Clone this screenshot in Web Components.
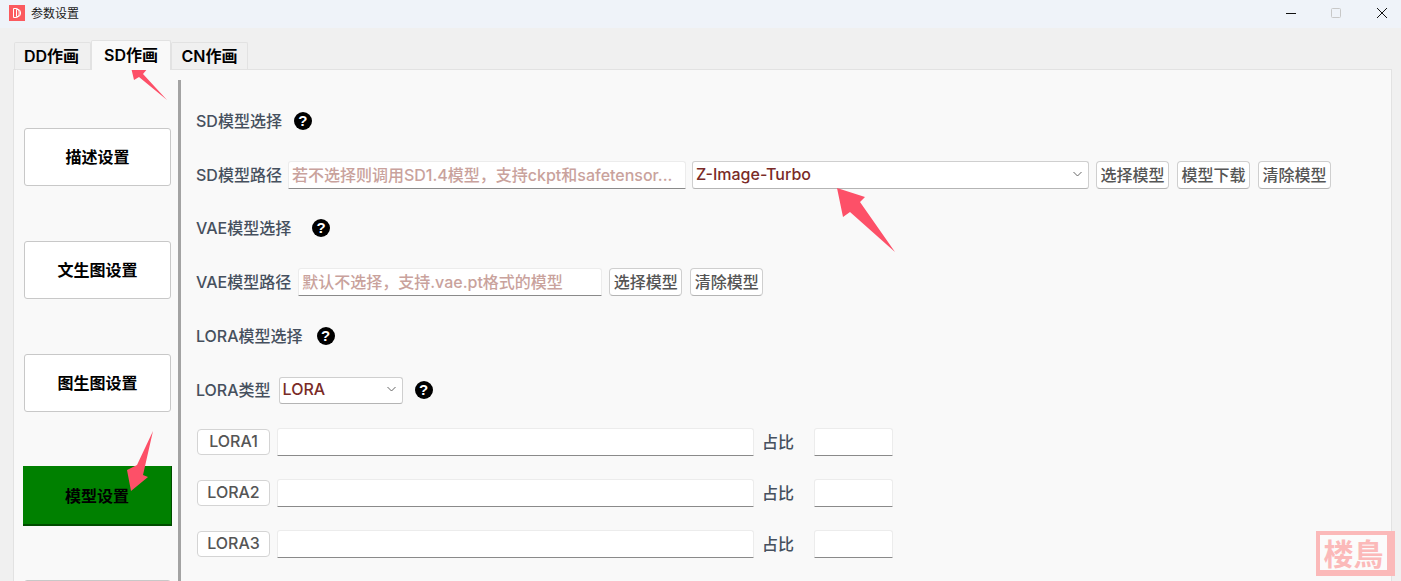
<!DOCTYPE html>
<html lang="zh-CN"><head><meta charset="utf-8"><title>参数设置</title>
<style>
html,body{margin:0;height:581px;overflow:hidden;background:#f0f0f0}
body{font-family:Inter,"Noto Sans CJK SC",sans-serif;font-size:16px;font-weight:500}
</style></head><body>
<app-window>
  <title-bar slot="title">参数设置</title-bar>
  <tab-bar slot="tabs">
    <tab-item style="width:77px;padding-right:2px">DD作画</tab-item>
    <tab-item active style="width:80px">SD作画</tab-item>
    <tab-item style="width:77px">CN作画</tab-item>
  </tab-bar>
  <side-nav slot="nav">
    <side-button>描述设置</side-button>
    <side-button>文生图设置</side-button>
    <side-button>图生图设置</side-button>
    <side-button active>模型设置</side-button>
    <side-button>&nbsp;</side-button>
  </side-nav>
  <form-row top="37"><field-label>SD模型选择</field-label><help-icon style="margin-left:12px"></help-icon></form-row>
  <form-row top="26"><field-label>SD模型路径</field-label>
    <text-input style="width:398px;margin-left:6px" placeholder="若不选择则调用SD1.4模型，支持ckpt和safetensor..."></text-input>
    <combo-box style="width:397px;margin-left:6px">Z-Image-Turbo</combo-box>
    <push-button style="margin-left:7px">选择模型</push-button>
    <push-button style="margin-left:8px">模型下载</push-button>
    <push-button style="margin-left:8px">清除模型</push-button>
  </form-row>
  <form-row top="25"><field-label>VAE模型选择</field-label><help-icon style="margin-left:21px"></help-icon></form-row>
  <form-row top="26"><field-label>VAE模型路径</field-label>
    <text-input style="width:304px;margin-left:7px" placeholder="默认不选择，支持.vae.pt格式的模型"></text-input>
    <push-button style="margin-left:7px">选择模型</push-button>
    <push-button style="margin-left:8px">清除模型</push-button>
  </form-row>
  <form-row top="26"><field-label>LORA模型选择</field-label><help-icon style="margin-left:14px"></help-icon></form-row>
  <form-row top="26"><field-label>LORA类型</field-label>
    <combo-box style="width:124px;margin-left:8px;height:27px">LORA</combo-box>
    <help-icon style="margin-left:12px"></help-icon>
  </form-row>
  <lora-row top="24">LORA1</lora-row>
  <lora-row top="23">LORA2</lora-row>
  <lora-row top="23">LORA3</lora-row>
  <arrow-mark slot="over" points="130,63 148,68 143,74 167,100 139,77 134,80"></arrow-mark>
  <arrow-mark slot="over" points="837,188 865,197 860,202 895,252 850,212 843,217"></arrow-mark>
  <arrow-mark slot="over" points="153,431 143,475 148,477 131,491 127,470 137,465"></arrow-mark>
  <seal-mark slot="over">楼鳥</seal-mark>
</app-window>
<script>
function def(name, css, html, extra){
  customElements.define(name, class extends HTMLElement{
    constructor(){super();this.attachShadow({mode:'open'}).innerHTML='<style>'+css+'</style>'+html;}
    connectedCallback(){ if(extra) extra.call(this,this.shadowRoot); }
  });
}
const inputCss=':host{display:flex;box-sizing:border-box;flex:none;height:28px;align-items:center;background:#fff;border:1px solid #ececec;border-bottom:1px solid #8a8a8a;border-radius:3px 3px 0 0;padding:0 3px 2px;min-width:0;overflow:hidden}';
def('app-window',
 ':host{display:block;position:relative;width:1401px;height:581px;overflow:hidden;background:#f0f0f0}'+
 '.wrap{display:flex;flex-direction:column;height:100%}'+
 '.tabs{padding:12px 0 0 14px;height:29px;position:relative;z-index:1}'+
 '.panel{box-sizing:border-box;margin:0 9px 0 13px;height:520px;background:#f9f9f9;border:1px solid #e2e2e2;display:flex;flex:none}'+
 '.split{width:3px;background:#a3a3a3;margin-top:10px;flex:none}'+
 '.content{padding:0 0 0 15px;flex:1;min-width:0}',
 '<div class="wrap"><slot name="title"></slot><div class="tabs"><slot name="tabs"></slot></div>'+
 '<div class="panel"><slot name="nav"></slot><div class="split"></div><div class="content"><slot></slot></div></div></div><slot name="over"></slot>');
def('title-bar',
 ':host{display:flex;align-items:center;box-sizing:border-box;height:28px;padding-bottom:3px;background:#eff3f9;font-size:12px;font-weight:400;color:#1a1a1a;flex:none}'+
 '.ic{margin:0 6px 0 9px;display:block}.t{flex:1}.b{display:block;margin-bottom:-3px}',
 '<svg class="ic" width="16" height="16" viewBox="0 0 16 16"><rect width="16" height="16" fill="#fb5a5f"/><path d="M4.5 3.5h2.5a3.2 4.5 0 0 1 0 9H4.5z" fill="none" stroke="#fff" stroke-width="1"/><path d="M7.5 4.5h1.5a2.6 3.5 0 0 1 0 7H7.5z" fill="none" stroke="#fff" stroke-width="1"/></svg>'+
 '<span class="t"><slot></slot></span>'+
 '<svg class="b" width="115" height="28" viewBox="0 0 115 28"><path d="M0 13.5h10" stroke="#111" stroke-width="1"/><rect x="45.5" y="8.5" width="9" height="9" rx="1" fill="none" stroke="#c8c8c8"/><path d="M91 8l10 10M101 8l-10 10" stroke="#111" stroke-width="1" fill="none"/></svg>');
def('tab-bar',':host{display:flex;align-items:flex-end;height:29px}','<slot></slot>');
def('tab-item',
 ':host{display:flex;box-sizing:border-box;height:27px;padding-bottom:2px;align-items:center;justify-content:center;background:#f0f0f0;border:1px solid #e2e2e2;border-bottom:0;border-radius:2px 2px 0 0;color:#000;flex:none;font-weight:600}'+
 ':host([active]){height:30px;background:#f9f9f9;margin-bottom:-1px;padding-bottom:3px}',
 '<slot></slot>');
def('side-nav',':host{display:flex;flex-direction:column;width:164px;box-sizing:border-box;padding:58px 0 0 10px;gap:55px;flex:none}','<slot></slot>');
def('side-button',
 ':host{display:flex;flex:none;box-sizing:border-box;width:147px;height:58px;padding-bottom:2px;align-items:center;justify-content:center;background:#fff;border:1px solid #c8c8c8;border-radius:3px;color:#000;font-weight:600}'+
 ':host([active]){background:#008000;width:149px;height:60px;margin:-1px;border:0;border-right:1px solid #004d00;border-bottom:2px solid #004d00;border-radius:0;padding-bottom:0}',
 '<slot></slot>');
def('form-row',':host{display:flex;align-items:center;height:28px;color:#4a5563}','<slot></slot>',function(){this.style.marginTop=this.getAttribute('top')+'px';});
def('field-label',':host{display:block;color:#46505e;white-space:nowrap;flex:none;padding-bottom:2px}','<slot></slot>');
def('help-icon',
 ':host{display:flex;flex:none;width:18px;height:18px;border-radius:50%;background:#000;color:#fff;align-items:center;justify-content:center;font:700 15px/18px "Liberation Sans",sans-serif}',
 '?');
def('text-input',inputCss+'span{color:#c9a29c;white-space:nowrap;overflow:hidden}','<span></span>',function(r){r.querySelector('span').textContent=this.getAttribute('placeholder')||'';});
def('combo-box',
 ':host{display:flex;box-sizing:border-box;flex:none;height:28px;padding:0 3px 2px;align-items:center;background:#fff;border:1px solid #cfcfcf;border-bottom-color:#b4b4b4;border-radius:3px;color:#7a2b27}'+
 'span{flex:1}svg{margin-right:3px}',
 '<span><slot></slot></span><svg width="9" height="6" viewBox="0 0 9 6"><path d="M.5 1l4 4 4-4" fill="none" stroke="#666"/></svg>');
def('push-button',
 ':host{display:flex;flex:none;box-sizing:border-box;width:73px;height:28px;padding-bottom:2px;align-items:center;justify-content:center;background:#fff;border:1px solid #cfcfcf;border-bottom-color:#b4b4b4;border-radius:4px;color:#555}',
 '<slot></slot>');
def('lora-row',
 ':host{display:flex;align-items:center;height:28px;padding-left:1px;color:#4a5563}'+
 '.in{display:block;box-sizing:border-box;height:28px;background:#fff;border:1px solid #ececec;border-bottom:1px solid #8a8a8a;border-radius:3px 3px 0 0}'+
 '.btn{display:flex;box-sizing:border-box;width:73px;height:26px;padding-bottom:2px;align-items:center;justify-content:center;background:#fff;border:1px solid #d4d4d4;border-radius:4px;color:#555}'+
 '.lab{margin:0 20px 2px 8px;color:#46505e}',
 '<span class="btn"><slot></slot></span><span class="in" style="width:477px;margin-left:7px"></span><span class="lab">占比</span><span class="in" style="width:79px"></span>',
 function(){this.style.marginTop=this.getAttribute('top')+'px';});
def('arrow-mark',':host{display:block;position:absolute;left:0;top:0;width:1401px;height:581px;pointer-events:none}svg{display:block}polygon{fill:#fd5068}',
 '<svg width="1401" height="581"><polygon></polygon></svg>',function(r){r.querySelector('polygon').setAttribute('points',this.getAttribute('points'));});
def('seal-mark',
 ':host{display:flex;position:absolute;left:1316px;top:531px;width:79px;height:45px;box-sizing:border-box;border:solid #fbb9b9;border-width:4px 8px 6px 4px;background:#fbfbfb;color:#fbb9b9;font:700 30px/33px "Noto Sans CJK SC",sans-serif;align-items:center;justify-content:center;white-space:nowrap;overflow:hidden}',
 '<slot></slot>');
</script>
</body></html>
